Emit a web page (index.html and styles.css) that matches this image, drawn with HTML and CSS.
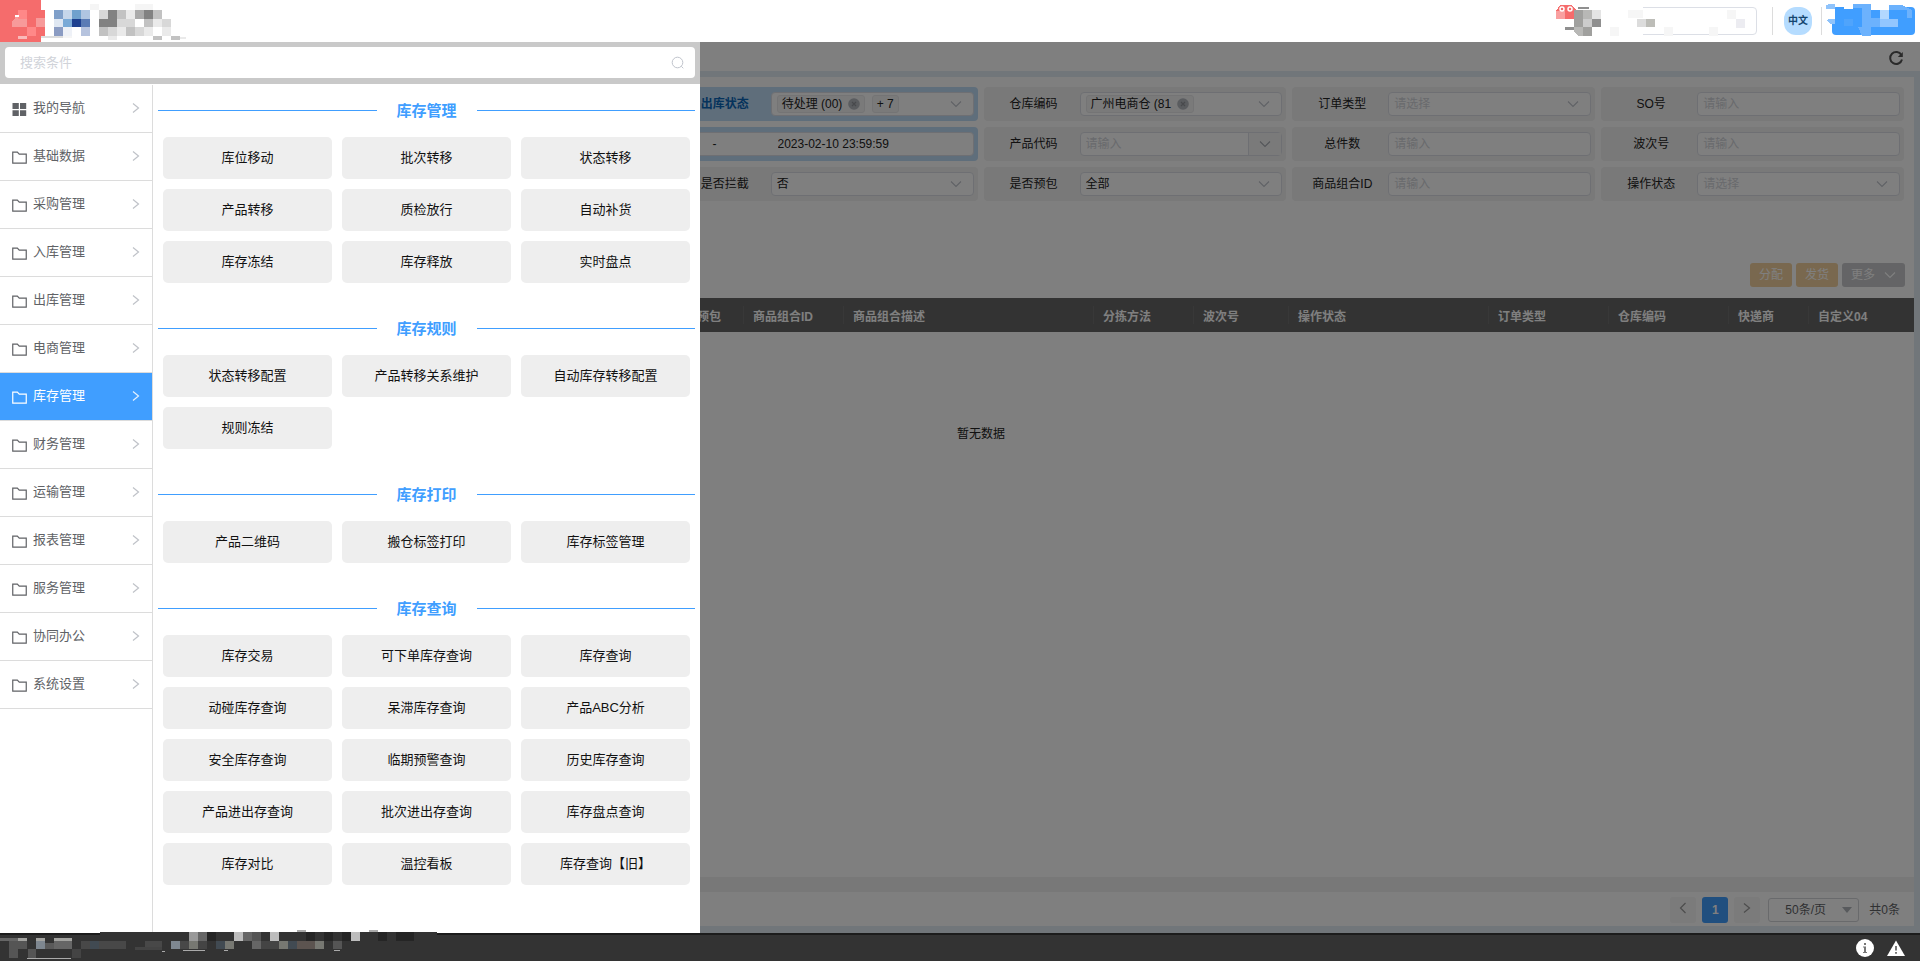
FILE: index.html
```html
<!DOCTYPE html>
<html lang="zh-CN">
<head>
<meta charset="utf-8">
<title>库存管理</title>
<link rel="stylesheet" href="styles.css">
</head>
<body>
<svg class="defs" aria-hidden="true">
  <symbol id="folder" viewBox="0 0 15 13"><path d="M.75 12.2V1.2h4.6l1.9 2h7v9z" fill="none" stroke="currentColor" stroke-width="1.2"/></symbol>
  <symbol id="grid" viewBox="0 0 15 13"><path d="M.5 0h6.3v6H.5zM8 0h6.2v6H8zM.5 7.2h6.3V13H.5zM8 7.2h6.2V13H8z" fill="currentColor"/></symbol>
  <symbol id="right" viewBox="0 0 8 12"><path d="M1 1.5 6.5 6 1 10.5" fill="none" stroke="currentColor" stroke-width="1.2"/></symbol>
  <symbol id="left" viewBox="0 0 8 12"><path d="M6.5 1 1.500 6l5 5" fill="none" stroke="currentColor" stroke-width="1.2"/></symbol>
  <symbol id="down" viewBox="0 0 12 8"><path d="m1 1.5 5 5 5-5" fill="none" stroke="currentColor" stroke-width="1.1"/></symbol>
  <symbol id="clear" viewBox="0 0 12 12"><circle cx="6" cy="6" r="5.8" fill="#b4b8be"/><path d="m4 4 4 4m0-4L4 8" stroke="#909399" stroke-width="1.2"/></symbol>
</svg>
<div class="app">
  <header class="top">
    <svg class="brand" viewBox="0 0 200 42" role="img" aria-label="logo" shape-rendering="crispEdges">
      <path fill="#f56c6c" d="M0 0h41v10h4v26h-4v6H0z"/>
      <path fill="#f79a9a" d="M12 22l6-8h9v13H12zM36 18h9v9h-9z"/><path fill="#f88" d="M18 10h9v9h-9zM27 27h9v9h-9z"/><path fill="#fff" d="M15 15h4v2h-4z"/><path fill="#f9b9b9" d="M18 36h9v3h-9z"/><path fill="#ddd" d="M41 36h22v2H41z"/>
      <path fill="#7f9fc9" d="M54 10h9v9h-9z"/><path fill="#c6d6ea" d="M63 10h9v9h-9z"/><path fill="#70a1cd" d="M72 10h9v9h-9z"/><path fill="#b0c5e1" d="M81 10h9v9h-9z"/>
      <path fill="#dfe7f2" d="M54 19h9v8h-9z"/><path fill="#7aaad7" d="M63 19h9v8h-9z"/><path fill="#1f4190" d="M72 19h9v8h-9z"/><path fill="#5a7bb5" d="M81 19h9v8h-9z"/>
      <path fill="#8b9cc3" d="M54 27h9v9h-9z"/><path fill="#eef1f7" d="M63 27h9v9h-9z"/><path fill="#b6c3de" d="M81 27h9v9h-9z"/>
      <path fill="#f5f5f5" d="M90 4h9v6h-9zM135 4h18v6h-18zM63 36h9v2h-9z"/>
      <path fill="#d8d8d8" d="M99 10h9v9h-9zM117 19h18v8h-18zM108 27h9v9h-9zM162 19h9v8h-9zM135 27h9v9h-9z"/>
      <path fill="#828282" d="M108 10h9v9h-9zM144 10h9v9h-9zM99 19h18v8H99z"/>
      <path fill="#c2c2c2" d="M117 10h9v9h-9zM153 10h9v9h-9zM144 19h9v8h-9zM99 27h9v9h-9zM126 27h9v9h-9zM153 36h9v4h-9zM171 36h9v4h-9z"/>
      <path fill="#aaa" d="M135 10h9v9h-9z"/>
      <path fill="#eaeaea" d="M126 10h9v9h-9zM153 19h9v8h-9zM117 27h9v9h-9zM144 27h9v9h-9zM162 27h9v9h-9zM108 36h9v4h-9zM180 37h6v2h-6z"/>
    </svg>
    <div class="top-tools">
      <input class="top-input" type="text" aria-label="搜索">
      <span class="lang"><button class="lang-btn" type="button">中文</button></span>
      <button class="user" type="button" aria-label="用户"></button>
    </div>
    <svg class="mosaic" viewBox="0 0 400 42" aria-hidden="true" shape-rendering="crispEdges">
      <path fill="#fff" d="M57 6h66v31H57z"/>
      <path fill="#f56c6c" d="M36 19V11l4-6h12l4 5v9z"/><path fill="#f9a0a0" d="M36 11h9v8h-9z"/><g fill="none" stroke="#fff" stroke-width="1.5" shape-rendering="auto"><circle cx="42" cy="9" r="2"/><circle cx="50" cy="9" r="2"/></g>
      <path fill="#a0a09e" d="M54 10h9v17h-9zM63 10h9v26H59l-5-5v-4h9z"/><path fill="#b8b8b6" d="M54 27h9v9h-5l-4-4zM63 10h9v9h-9z"/><path fill="#8f8f8f" d="M58 7h11v2H58zM72 19h9v8h-9zM45 27h9v3h-9z"/><path fill="#ccc" d="M63 19h9v8h-9z"/><path fill="#e4e4e4" d="M72 10h9v9h-9z"/>
      <path fill="#dcdcdc" d="M117 19h9v8h-9z"/><path fill="#bdbdb8" d="M126 19h9v8h-9z"/><path fill="#ececf1" d="M216 19h9v9h-9z"/><path fill="#f6f6f6" d="M90 27h9v9h-9zM108 10h15v8h-15zM144 27h9v9h-9zM189 27h9v9h-9zM207 10h9v9h-9z"/>
      <path fill="#fff" d="M310 6h5v14h-5zM324 4h9v5h-9zM351 5h18v5h-18z"/><path fill="#8fc3fb" d="M306 5l4-1h5v5h-9zM306 20l4-1h5v5h-5z"/><path fill="#6cb2fd" d="M333 4h18v4h-18zM342 8h9v10h-9zM369 5h13l10 5v8h-5v-8h-18zM342 18h18v9h-9v9h-9l-4-9h4z"/><path fill="#b3d8ff" d="M360 10h9v9h-9z"/><path fill="#92c6ff" d="M360 19h18v8h-18z"/><path fill="#4fa4fc" d="M324 19h9v7h-9z"/>
    </svg>
  </header>

  <div class="stage">
    <main class="page">
      <div class="tabs"><button class="refresh" type="button" aria-label="刷新"><svg viewBox="0 0 16 16"><path d="M13.4 5A6 6 0 1 0 14 9.500" fill="none" stroke="#555" stroke-width="2"/><path d="M14.800 2v5H9.800z" fill="#555"/></svg></button></div>
      <section class="card">
        <form class="filters">
          <div class="cell c3 on"><label for="f1">出库状态</label><div class="box tags" id="f1"><span class="tag">待处理 (00) <svg><use href="#clear"/></svg></span><span class="tag">+ 7</span><svg class="arr"><use href="#down"/></svg></div></div>
          <div class="cell c4"><label for="f2">仓库编码</label><div class="box tags" id="f2"><span class="tag">广州电商仓 (81 <svg><use href="#clear"/></svg></span><svg class="arr"><use href="#down"/></svg></div></div>
          <div class="cell c5"><label for="f3">订单类型</label><div class="box"><select id="f3" class="empty"><option>请选择</option></select><svg class="arr"><use href="#down"/></svg></div></div>
          <div class="cell c6"><label for="f4">SO号</label><div class="box"><input id="f4" type="text" placeholder="请输入"></div></div>
          <div class="cell wide on"><div class="box range"><span>-</span><input type="text" aria-label="结束时间" value="2023-02-10 23:59:59"></div></div>
          <div class="cell c4"><label for="f5">产品代码</label><div class="box"><input id="f5" type="text" placeholder="请输入"><button class="addon" type="button" aria-label="展开"><svg><use href="#down"/></svg></button></div></div>
          <div class="cell c5"><label for="f6">总件数</label><div class="box"><input id="f6" type="text" placeholder="请输入"></div></div>
          <div class="cell c6"><label for="f7">波次号</label><div class="box"><input id="f7" type="text" placeholder="请输入"></div></div>
          <div class="cell c3"><label for="f8">是否拦截</label><div class="box"><select id="f8"><option>否</option></select><svg class="arr"><use href="#down"/></svg></div></div>
          <div class="cell c4"><label for="f9">是否预包</label><div class="box"><select id="f9"><option>全部</option></select><svg class="arr"><use href="#down"/></svg></div></div>
          <div class="cell c5"><label for="f10">商品组合ID</label><div class="box"><input id="f10" type="text" placeholder="请输入"></div></div>
          <div class="cell c6"><label for="f11">操作状态</label><div class="box"><select id="f11" class="empty"><option>请选择</option></select><svg class="arr"><use href="#down"/></svg></div></div>
        </form>
        <div class="actions">
          <button class="btn warn" type="button">分配</button>
          <button class="btn warn" type="button">发货</button>
          <button class="btn info" type="button">更多 <svg><use href="#down"/></svg></button>
        </div>
        <div class="table-wrap">
          <table class="table">
            <colgroup><col><col class="w80"><col class="w100"><col class="w250"><col class="w100"><col class="w95"><col class="w200"><col class="w120"><col class="w120"><col class="w80"><col class="w106"></colgroup>
            <thead><tr><td></td><th>是否预包</th><th>商品组合ID</th><th>商品组合描述</th><th>分拣方法</th><th>波次号</th><th>操作状态</th><th>订单类型</th><th>仓库编码</th><th>快递商</th><th>自定义04</th></tr></thead>
            <tbody><tr><td colspan="11" class="none">暂无数据</td></tr></tbody>
          </table>
        </div>
        <div class="scroll"></div>
        <div class="pager">
          <button class="pg" type="button" aria-label="上一页"><svg><use href="#left"/></svg></button>
          <button class="pg cur" type="button">1</button>
          <button class="pg" type="button" aria-label="下一页"><svg><use href="#right"/></svg></button>
          <div class="size"><select aria-label="每页条数"><option>50条/页</option></select><svg viewBox="0 0 10 6"><path d="M0 0h10L5 6z" fill="#b0b4ba"/></svg></div>
          <span>共0条</span>
        </div>
      </section>
    </main>
    <div class="mask"></div>

    <aside class="drawer">
      <div class="search"><input type="search" placeholder="搜索条件" aria-label="搜索条件"><svg viewBox="0 0 14 14"><circle cx="6.5" cy="6.5" r="5.3" fill="none" stroke="#c0c4cc"/><path d="m10.3 10.3 2 2" stroke="#c0c4cc"/></svg></div>
      <div class="drawer-body">
        <nav class="nav">
          <a href="#"><svg class="ic"><use href="#grid"/></svg><span>我的导航</span><svg class="go"><use href="#right"/></svg></a>
          <a href="#"><svg class="ic"><use href="#folder"/></svg><span>基础数据</span><svg class="go"><use href="#right"/></svg></a>
          <a href="#"><svg class="ic"><use href="#folder"/></svg><span>采购管理</span><svg class="go"><use href="#right"/></svg></a>
          <a href="#"><svg class="ic"><use href="#folder"/></svg><span>入库管理</span><svg class="go"><use href="#right"/></svg></a>
          <a href="#"><svg class="ic"><use href="#folder"/></svg><span>出库管理</span><svg class="go"><use href="#right"/></svg></a>
          <a href="#"><svg class="ic"><use href="#folder"/></svg><span>电商管理</span><svg class="go"><use href="#right"/></svg></a>
          <a href="#" class="active"><svg class="ic"><use href="#folder"/></svg><span>库存管理</span><svg class="go"><use href="#right"/></svg></a>
          <a href="#"><svg class="ic"><use href="#folder"/></svg><span>财务管理</span><svg class="go"><use href="#right"/></svg></a>
          <a href="#"><svg class="ic"><use href="#folder"/></svg><span>运输管理</span><svg class="go"><use href="#right"/></svg></a>
          <a href="#"><svg class="ic"><use href="#folder"/></svg><span>报表管理</span><svg class="go"><use href="#right"/></svg></a>
          <a href="#"><svg class="ic"><use href="#folder"/></svg><span>服务管理</span><svg class="go"><use href="#right"/></svg></a>
          <a href="#"><svg class="ic"><use href="#folder"/></svg><span>协同办公</span><svg class="go"><use href="#right"/></svg></a>
          <a href="#"><svg class="ic"><use href="#folder"/></svg><span>系统设置</span><svg class="go"><use href="#right"/></svg></a>
        </nav>
        <div class="menu">
          <section><h2>库存管理</h2><div class="links"><a href="#">库位移动</a><a href="#">批次转移</a><a href="#">状态转移</a><a href="#">产品转移</a><a href="#">质检放行</a><a href="#">自动补货</a><a href="#">库存冻结</a><a href="#">库存释放</a><a href="#">实时盘点</a></div></section>
          <section><h2>库存规则</h2><div class="links"><a href="#">状态转移配置</a><a href="#">产品转移关系维护</a><a href="#">自动库存转移配置</a><a href="#">规则冻结</a></div></section>
          <section><h2>库存打印</h2><div class="links"><a href="#">产品二维码</a><a href="#">搬仓标签打印</a><a href="#">库存标签管理</a></div></section>
          <section><h2>库存查询</h2><div class="links"><a href="#">库存交易</a><a href="#">可下单库存查询</a><a href="#">库存查询</a><a href="#">动碰库存查询</a><a href="#">呆滞库存查询</a><a href="#">产品ABC分析</a><a href="#">安全库存查询</a><a href="#">临期预警查询</a><a href="#">历史库存查询</a><a href="#">产品进出存查询</a><a href="#">批次进出存查询</a><a href="#">库存盘点查询</a><a href="#">库存对比</a><a href="#">温控看板</a><a href="#">库存查询【旧】</a></div></section>
        </div>
      </div>
    </aside>
  </div>

  <footer class="foot">
    <svg class="foot-mosaic" viewBox="0 0 480 31" aria-hidden="true" shape-rendering="crispEdges">
      <path fill="#333" d="M100 2h337v4H100z"/>
      <path fill="#666" d="M0 8h18v3H0zM54 11h18v8H54zM225 11h9v8h-9zM243 2h9v9h-9zM198 2h9v9h-9zM252 11h9v8h-9z"/>
      <path fill="#555" d="M9 11h18v8H9zM9 19h9v9H9zM28 19h8v9h-8zM252 2h9v9h-9zM333 11h9v8h-9z"/>
      <path fill="#484848" d="M81 11h9v8h-9zM99 11h27v8H99zM145 11h17v8h-17zM180 11h9v8h-9z"/><path fill="#5c5450" d="M297 11h18v8h-18z"/>
      <path fill="#a3a3a0" d="M18 8h9v3h-9zM36 8h9v3h-9zM54 8h18v3H54z"/><path fill="#7e8790" d="M36 11h9v8h-9zM171 11h9v8h-9z"/><path fill="#5a5a5a" d="M45 13h9v6h-9z"/>
      <path fill="#999" d="M189 2h9v9h-9z"/><path fill="#bdbdbd" d="M234 2h9v9h-9zM270 2h9v9h-9zM351 2h9v9h-9z"/>
      <path fill="#777872" d="M189 11h9v8h-9zM225 11h9v8h-9zM315 11h9v8h-9zM279 11h9v8h-9z"/><path fill="#414a52" d="M90 11h9v8h-9zM216 11h9v8h-9zM288 11h9v8h-9z"/>
      <path fill="#444" d="M72 19h9v9h-9zM135 17h27v3h-27zM198 11h9v8h-9zM261 11h18v8h-18z"/><path fill="#252525" d="M207 2h9v9h-9zM306 2h9v9h-9zM324 2h9v9h-9zM342 2h9v9h-9zM378 2h9v9h-9zM396 2h18v9h-18z"/>
      <path fill="#aaa" d="M27 28h44v1H27zM162 21h3v1h-3zM183 20h22v1h-22zM224 20h4v1h-4zM334 20h6v1h-6zM297 0h9v2h-9zM369 0h9v2h-9z"/>
    </svg>
    <button type="button" aria-label="信息"><svg viewBox="0 0 18 18"><circle cx="9" cy="9" r="9" fill="#fff"/><path d="M8 4h2v2H8zM7 7.5h3V13h1v1H7v-1h1V8.500H7z" fill="#777"/></svg></button>
    <button type="button" aria-label="警告"><svg viewBox="0 0 18 18"><path d="M9 1.500 18 17H0z" fill="#fff"/><path d="M8 7h2v4.500H8zM8 13h2v1.800H8z" fill="#777"/></svg></button>
  </footer>
</div>
</body>
</html>
```
FILE: styles.css
```css
* { box-sizing: border-box; }
body { margin: 0; font: 12px/16px "Liberation Sans", "Noto Sans CJK SC", sans-serif; color: #222; }
button, input, select { font: inherit; color: inherit; margin: 0; padding: 0; border: 0; background: none; }
a { color: inherit; text-decoration: none; }
.defs { position: absolute; width: 0; height: 0; }
.app { display: flex; flex-direction: column; min-height: 100vh; }

/* header */
.top { position: relative; display: flex; justify-content: space-between; height: 42px; background: #fff; }
.brand { width: 200px; height: 42px; }
.top-tools { display: flex; align-items: center; padding-right: 5px; }
.top-input { width: 160px; height: 28px; border: 1px solid #dcdfe6; border-radius: 4px; }
.lang { display: flex; height: 28px; margin: 0 10px 0 15px; padding: 0 9px 0 11px; border: solid #dcdcdc; border-width: 0 1px; }
.lang-btn { width: 28px; height: 28px; border-radius: 12px; background: #b5dcff; color: #14466f; font-size: 10px; font-weight: 700; }
.user { width: 83px; height: 28px; border-radius: 4px; background: #409eff; }
.mosaic { position: absolute; top: 0; right: 0; width: 400px; height: 42px; pointer-events: none; }

.stage { position: relative; flex: 1; display: flex; flex-direction: column; }
.mask { position: absolute; inset: 0; background: rgba(0, 0, 0, .5); }

/* page */
.page { flex: 1; display: flex; flex-direction: column; padding: 0 6px 7px 48px; background: #e2ecf5; }
.tabs { display: flex; justify-content: flex-end; align-items: center; height: 29px; margin: 0 -6px 6px -48px; padding: 2px 16px 0; background: #fff; }
.refresh, .refresh svg { display: block; width: 16px; height: 16px; }
.card { flex: 1; display: flex; flex-direction: column; background: #fff; }
.filters { display: grid; grid-template-columns: repeat(6, 1fr); gap: 6px; padding: 10px 10px 0 9px; }
.cell { display: flex; align-items: center; height: 34px; padding: 0 4px; border-radius: 4px; background: #f3f3f3; }
.cell.on { background: #bedcf6; }
.cell.on label { color: #0a66b8; font-weight: 700; }
.c3 { grid-column: 3; }
.c4 { grid-column: 4; }
.c5 { grid-column: 5; }
.c6 { grid-column: 6; }
.wide { grid-column: 2 / 4; }
.cell label { flex: none; width: 92px; text-align: center; }
.box { position: relative; flex: 1; display: flex; align-items: center; min-width: 0; height: 24px; border: 1px solid #dcdfe6; border-radius: 4px; background: #fff; }
.box input, .box select { flex: 1; min-width: 0; height: 22px; padding: 0 5px; appearance: none; outline: 0; }
.box input::placeholder, .box .empty { color: #d2d4da; opacity: 1; }
.arr { position: absolute; right: 11px; top: 7px; width: 12px; height: 8px; color: #c0c4cc; pointer-events: none; }
.tags { gap: 7px; padding: 0 5px; }
.tag { display: flex; align-items: center; gap: 2px; height: 18px; padding: 0 4px; border: 1px solid #e9e9eb; border-radius: 3px; background: #f4f4f5; white-space: pre; }
.tag svg { width: 12px; height: 12px; }
.range { justify-content: flex-end; }
.range span { width: 60px; }
.range input { flex: none; width: 200px; }
.addon { width: 33px; height: 22px; border-left: 1px solid #dcdfe6; background: #f5f5f5; color: #a8abb2; }
.addon svg { width: 12px; height: 8px; }
.actions { display: flex; justify-content: flex-end; gap: 4px; padding: 62px 9px 11px; }
.btn { height: 24px; padding: 0 9px; border-radius: 3px; color: #fff; }
.warn { background: #f3d19e; }
.info { display: flex; align-items: center; gap: 9px; background: #c8c9cc; }
.info svg { width: 12px; height: 8px; }
.table-wrap { flex: 1; }
.table { width: 100%; table-layout: fixed; border-collapse: collapse; }
.table thead { background: #666; color: #fff; }
.table th, .table thead td { height: 34px; padding: 3px 10px 0; text-align: left; white-space: nowrap; }
.table th + th { background: linear-gradient(#707070, #707070) 0 8px / 1px 18px no-repeat; }
.w80 { width: 80px; }
.w95 { width: 95px; }
.w100 { width: 100px; }
.w106 { width: 106px; }
.w120 { width: 120px; }
.w200 { width: 200px; }
.w250 { width: 250px; }
.table .none { padding: 94px 0 0; text-align: center; }
.scroll { height: 15px; background: #f1f1f1; }
.pager { display: flex; align-items: center; justify-content: flex-end; gap: 6px; height: 34px; padding: 2px 14px 0 0; color: #606266; }
.pg { width: 26px; height: 26px; border-radius: 3px; background: #f6f6f6; color: #999; }
.pg svg { width: 8px; height: 12px; }
.cur { background: #409eff; color: #fff; font-weight: 700; }
.size { position: relative; width: 91px; height: 24px; margin: 0 4px 0 2px; border: 1px solid #d2d4d8; border-radius: 3px; }
.size select { width: 100%; height: 22px; padding-left: 16px; appearance: none; }
.size svg { position: absolute; right: 6px; top: 8px; width: 10px; height: 6px; }

/* drawer */
.drawer { position: absolute; left: 0; top: 0; bottom: 0; width: 700px; display: flex; flex-direction: column; background: #fff; font-size: 13px; }
.search { position: relative; flex: none; height: 42px; padding: 5px 5px 6px; background: #c9c9c9; }
.search input { display: block; width: 100%; height: 31px; padding: 0 15px; border-radius: 4px; background: #fff; appearance: none; outline: 0; }
.search input::placeholder { color: #d0d3d9; opacity: 1; }
.search svg { position: absolute; right: 15px; top: 14px; width: 14px; height: 14px; }
.drawer-body { flex: 1; display: flex; padding-top: 1px; }
.nav { width: 153px; border-right: 1px solid #dcdcdc; color: #606266; }
.nav a { display: flex; align-items: center; height: 48px; padding: 0 12px 2px; border-bottom: 1px solid #dcdcdc; }
.nav .ic { width: 15px; height: 13px; margin: 3px 6px 0 0; }
.nav span { flex: 1; }
.nav .go { width: 8px; height: 12px; color: #bfc2c8; }
.nav .active { background: #409eff; color: #fff; }
.nav .active .go { color: #e4f1ff; }
.menu { flex: 1; padding: 16px 5px 0; }
.menu section { margin-bottom: 36px; }
.menu h2 { display: flex; align-items: center; gap: 20px; margin: 0 0 17px; font-size: 15px; line-height: 19px; color: #409eff; }
.menu h2::before, .menu h2::after { content: ""; flex: 1; height: 1px; background: #409eff; }
.links { display: grid; grid-template-columns: repeat(3, 1fr); gap: 10px; padding: 0 5px; }
.links a { display: flex; align-items: center; justify-content: center; height: 42px; border-radius: 5px; background: #eee; color: #111; }

/* footer */
.foot { position: relative; display: flex; align-items: center; justify-content: flex-end; gap: 13px; height: 28px; padding-right: 15px; border-top: 2px solid #1c1c1c; background: #333; }
.foot button, .foot button svg { display: block; width: 18px; height: 18px; }
.foot-mosaic { position: absolute; left: 0; bottom: 0; width: 480px; height: 31px; }
```
